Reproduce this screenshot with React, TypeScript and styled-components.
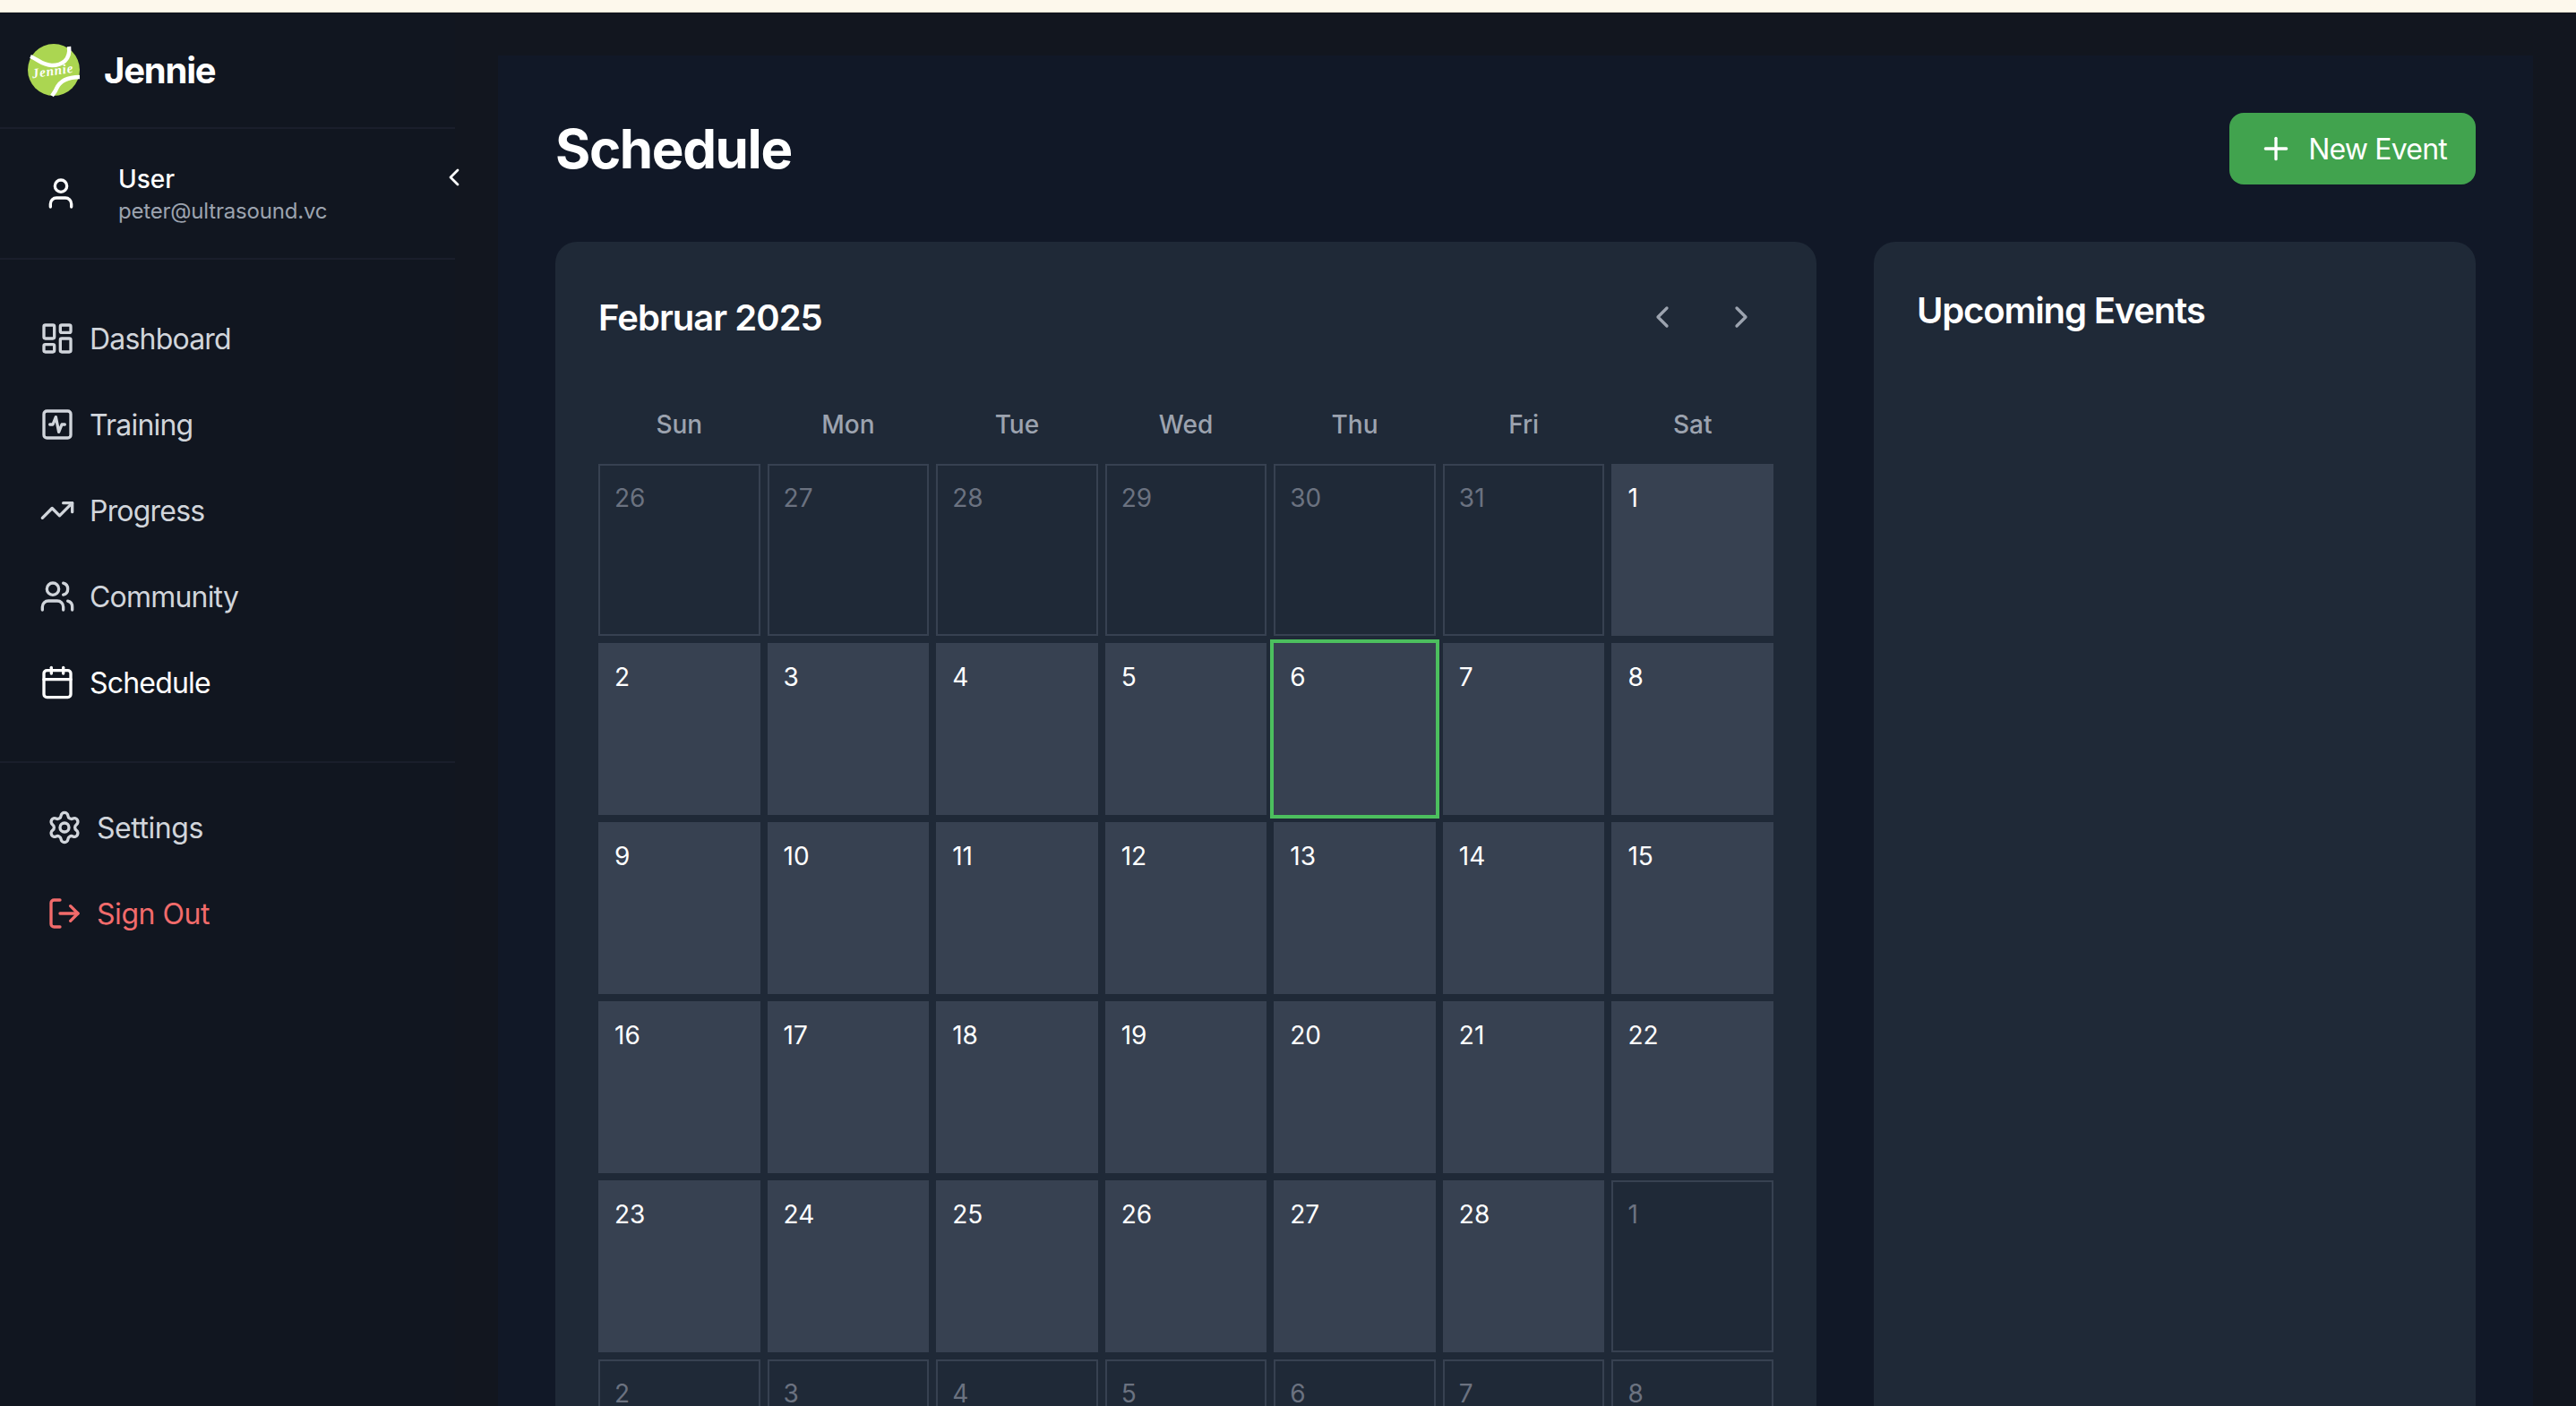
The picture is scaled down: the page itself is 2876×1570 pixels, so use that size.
import styled, { createGlobalStyle } from 'styled-components';
import {
  Calendar,
  ChevronLeft,
  ChevronRight,
  LayoutDashboard,
  LogOut,
  Plus,
  Settings,
  SquareActivity,
  TrendingUp,
  User,
  Users,
} from 'lucide-react';

const GlobalStyle = createGlobalStyle`
  * {
    box-sizing: border-box;
  }

  html,
  body {
    margin: 0;
    background-color: #12161f;
    font-family: Inter, 'Noto Sans', sans-serif;
    overflow: hidden;
  }

  #root {
    height: 1570px;
    overflow: hidden;
  }
`;

const TopStrip = styled.div`
  height: 14px;
  background-color: #fdf8ec;
  border-bottom: 1px solid #e9e3d2;
`;

const Shell = styled.div`
  display: flex;
  height: 1556px;
`;

// ---------------------------------------------------------------
// Sidebar

const Sidebar = styled.aside`
  position: relative;
  flex: 0 0 508px;
  background-color: #111620;
`;

const Brand = styled.div`
  display: flex;
  align-items: center;
  gap: 24px;
  height: 130px;
  padding: 0 28px;
  border-bottom: 2px solid #1a1e2b;
`;

const BrandName = styled.span`
  padding-top: 2px;
  font-size: 40px;
  line-height: 56px;
  font-weight: 700;
  letter-spacing: -0.03em;
  color: #fff;
`;

const CollapseButton = styled.button`
  position: absolute;
  top: 168px;
  left: 491px;
  display: flex;
  padding: 0;
  color: #fff;
  background: transparent;
  border: 0;
`;

const UserBlock = styled.div`
  display: flex;
  align-items: center;
  gap: 24px;
  padding: 32px 28px;
  border-bottom: 2px solid #1a1e2b;
`;

const Avatar = styled.div`
  display: flex;
  align-items: center;
  justify-content: center;
  width: 80px;
  height: 80px;
  color: #fff;
`;

const UserName = styled.div`
  font-size: 28px;
  line-height: 40px;
  font-weight: 500;
  color: #fff;
`;

const UserEmail = styled.div`
  font-size: 24px;
  line-height: 32px;
  letter-spacing: -0.008em;
  color: #9ca3af;
`;

const NavList = styled.nav`
  padding: 40px 44px;
  border-bottom: 2px solid #1a1e2b;
`;

const FooterList = styled.div`
  padding: 24px 52px;
`;

const NavItem = styled.a<{ $active?: boolean; $danger?: boolean }>`
  display: flex;
  align-items: center;
  gap: 16px;
  height: 96px;
  font-size: 32px;
  line-height: 48px;
  letter-spacing: -0.025em;
  color: ${({ $active, $danger }) =>
    $danger ? '#f26b6b' : $active ? '#fff' : '#d1d5db'};
`;

const FooterItem = styled(NavItem)`
  letter-spacing: -0.014em;
`;

const NavLabel = styled.span`
  padding-top: 2px;
`;

// ---------------------------------------------------------------
// Main panel

const MainArea = styled.main`
  flex: 1;
  min-width: 0;
  padding: 48px 48px 0;
`;

const Panel = styled.div`
  height: 100%;
  padding: 64px;
  background-color: #111827;
`;

const PageHeader = styled.header`
  display: flex;
  align-items: center;
  justify-content: space-between;
  margin-bottom: 64px;
`;

const PageTitle = styled.h1`
  margin: 0;
  font-size: 60px;
  line-height: 72px;
  font-weight: 700;
  letter-spacing: -0.023em;
  color: #fff;
`;

const NewEventButton = styled.button`
  display: flex;
  align-items: center;
  gap: 16px;
  height: 80px;
  padding: 0 32px;
  font-family: inherit;
  font-size: 32px;
  line-height: 48px;
  letter-spacing: -0.025em;
  color: #fff;
  background-color: #41a34e;
  border: 0;
  border-radius: 16px;
`;

const Columns = styled.div`
  display: grid;
  grid-template-columns: repeat(3, minmax(0, 1fr));
  gap: 64px;
`;

const Card = styled.section<{ $wide?: boolean }>`
  grid-column: ${({ $wide }) => ($wide ? 'span 2' : 'span 1')};
  padding: 48px;
  background-color: #1f2937;
  border-radius: 24px;
`;

const CalendarHeader = styled.div`
  display: flex;
  align-items: center;
  justify-content: space-between;
  margin-bottom: 48px;
`;

const CardTitle = styled.h2`
  margin: 0;
  padding-top: 1px;
  font-size: 40px;
  line-height: 56px;
  font-weight: 600;
  letter-spacing: -0.0245em;
  color: #fff;
`;

const UpcomingTitle = styled(CardTitle)`
  letter-spacing: -0.029em;
`;

const MonthNav = styled.div`
  display: flex;
  gap: 16px;
`;

const MonthButton = styled.button`
  display: flex;
  padding: 16px;
  color: #9ca3af;
  background: transparent;
  border: 0;
`;

const DayGrid = styled.div`
  display: grid;
  grid-template-columns: repeat(7, minmax(0, 1fr));
  gap: 8px;
`;

const Weekday = styled.div`
  padding: 16px 0;
  font-size: 28px;
  line-height: 40px;
  font-weight: 500;
  text-align: center;
  color: #9ca3af;
`;

const Day = styled.div<{ $muted?: boolean; $today?: boolean }>`
  height: 192px;
  padding: 16px;
  font-size: 28px;
  line-height: 40px;
  color: ${({ $muted }) => ($muted ? '#6b7280' : '#fff')};
  background-color: ${({ $muted }) => ($muted ? 'transparent' : '#374151')};
  border: 2px solid #374151;
  box-shadow: ${({ $today }) => ($today ? '0 0 0 4px #4cbf5e' : 'none')};
`;

// ---------------------------------------------------------------
// Data

const navLinks = [
  { label: 'Dashboard', Icon: LayoutDashboard },
  { label: 'Training', Icon: SquareActivity },
  { label: 'Progress', Icon: TrendingUp },
  { label: 'Community', Icon: Users },
  { label: 'Schedule', Icon: Calendar, active: true },
];

const weekdays = ['Sun', 'Mon', 'Tue', 'Wed', 'Thu', 'Fri', 'Sat'];

const days = [
  ...[26, 27, 28, 29, 30, 31].map((day) => ({ day, muted: true })),
  ...Array.from({ length: 28 }, (_, i) => ({ day: i + 1, muted: false })),
  ...[1, 2, 3, 4, 5, 6, 7, 8].map((day) => ({ day, muted: true })),
];

function BallLogo() {
  return (
    <svg width="64" height="64" viewBox="-3 -3 64 64" aria-label="Jennie logo">
      <circle cx="29" cy="29" r="29" fill="#abd651" />
      <path
        d="M3 14C11 17 16 24 27 24C38 24 48 18 46 3"
        fill="none"
        stroke="#fff"
        strokeWidth="4.5"
      />
      <path
        d="M58 37C46 37 36 41 32 50C31 53 29 55 27 58"
        fill="none"
        stroke="#fff"
        strokeWidth="4.5"
      />
      <text
        x="28"
        y="35"
        fontFamily="'Liberation Serif', serif"
        fontStyle="italic"
        fontWeight="700"
        fontSize="15"
        letterSpacing="0.8"
        fill="#fff"
        textAnchor="middle"
        transform="rotate(-8 28 31)">
        Jennie
      </text>
    </svg>
  );
}

// ---------------------------------------------------------------
// COMPONENT

function App() {
  return (
    <>
      <GlobalStyle />
      <TopStrip />
      <Shell>
        <Sidebar>
          <Brand>
            <BallLogo />
            <BrandName>Jennie</BrandName>
          </Brand>

          <CollapseButton aria-label="Collapse sidebar">
            <ChevronLeft size={32} />
          </CollapseButton>

          <UserBlock>
            <Avatar>
              <User size={40} />
            </Avatar>
            <div>
              <UserName>User</UserName>
              <UserEmail>peter@ultrasound.vc</UserEmail>
            </div>
          </UserBlock>

          <NavList>
            {navLinks.map(({ label, Icon, active }) => (
              <NavItem key={label} $active={active}>
                <Icon size={40} />
                <NavLabel>{label}</NavLabel>
              </NavItem>
            ))}
          </NavList>

          <FooterList>
            <FooterItem>
              <Settings size={40} />
              <NavLabel>Settings</NavLabel>
            </FooterItem>
            <FooterItem $danger>
              <LogOut size={40} />
              <NavLabel>Sign Out</NavLabel>
            </FooterItem>
          </FooterList>
        </Sidebar>

        <MainArea>
          <Panel>
            <PageHeader>
              <PageTitle>Schedule</PageTitle>
              <NewEventButton>
                <Plus size={40} />
                <NavLabel>New Event</NavLabel>
              </NewEventButton>
            </PageHeader>

            <Columns>
              <Card $wide>
                <CalendarHeader>
                  <CardTitle>Februar 2025</CardTitle>
                  <MonthNav>
                    <MonthButton aria-label="Previous month">
                      <ChevronLeft size={40} />
                    </MonthButton>
                    <MonthButton aria-label="Next month">
                      <ChevronRight size={40} />
                    </MonthButton>
                  </MonthNav>
                </CalendarHeader>

                <DayGrid>
                  {weekdays.map((name) => (
                    <Weekday key={name}>{name}</Weekday>
                  ))}
                  {days.map(({ day, muted }, index) => (
                    <Day key={index} $muted={muted} $today={!muted && day === 6}>
                      {day}
                    </Day>
                  ))}
                </DayGrid>
              </Card>

              <Card>
                <UpcomingTitle>Upcoming Events</UpcomingTitle>
              </Card>
            </Columns>
          </Panel>
        </MainArea>
      </Shell>
    </>
  );
}

export default App;
